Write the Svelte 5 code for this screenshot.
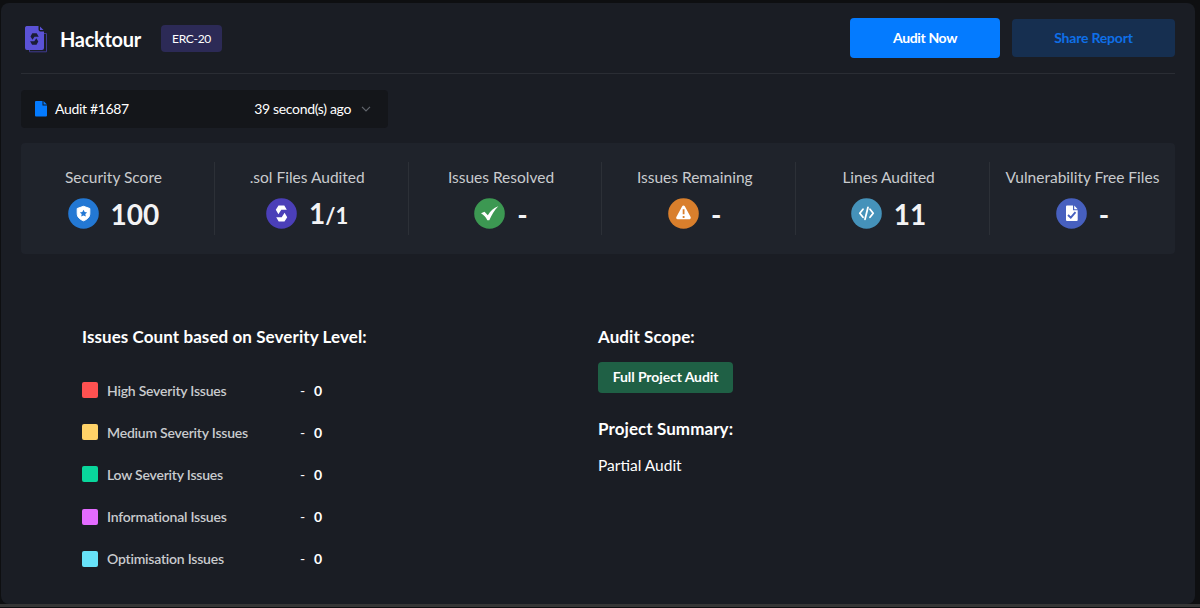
<script>
    const stats = [
        { label: 'Security Score', value: '100', icon: 'shield', color: '#2378d4' },
        { label: '.sol Files Audited', value: '1', total: '/1', icon: 'solidity', color: '#4b3fb8' },
        { label: 'Issues Resolved', value: '-', icon: 'check', color: '#3c9852' },
        { label: 'Issues Remaining', value: '-', icon: 'warning', color: '#d97f2c' },
        { label: 'Lines Audited', value: '11', icon: 'code', color: '#4592ba' },
        { label: 'Vulnerability Free Files', value: '-', icon: 'file', color: '#4760bf' },
    ];

    const issues = [
        { label: 'High Severity Issues', count: 0, color: '#ff5151' },
        { label: 'Medium Severity Issues', count: 0, color: '#ffd268' },
        { label: 'Low Severity Issues', count: 0, color: '#09d69c' },
        { label: 'Informational Issues', count: 0, color: '#e36bff' },
        { label: 'Optimisation Issues', count: 0, color: '#67e3f9' },
    ];
</script>

<main>
    <header>
        <svg class="logo" width="24" height="28" viewBox="0 0 24 28">
            <path d="M20 7.500h2.500v18.300H5.500V23.500" fill="none" stroke="#403b91" />
            <path d="M2.500 0H14.500V3.500a2 2 0 0 0 2 2H20V22a2 2 0 0 1-2 2H3a2 2 0 0 1-2-2V2a2 2 0 0 1 1.500-2Z" fill="#5b52d6" />
            <path d="M16 0.500 19.500 4H16Z" fill="#5b52d6" />
            <path d="M8.300 7.300h4.400l2 3.500h-4.200l-2 3-2-3.200ZM12.500 18.800H8.100l-2-3.500h4.200l2-3 2 3.200Z" fill="#1b1d35" />
        </svg>
        <h1>Hacktour</h1>
        <span class="tag">ERC-20</span>
        <div class="actions">
            <button class="primary">Audit Now</button>
            <button class="share">Share Report</button>
        </div>
    </header>

    <div class="picker">
        <svg width="12" height="16" viewBox="0 0 12 16" fill="#047bff">
            <path d="M1 0h6.500v4.500H12V14.500a1 1 0 0 1-1 1H1a1 1 0 0 1-1-1V1a1 1 0 0 1 1-1Z" />
            <path d="M8.500 0 12 3.500H8.500Z" />
        </svg>
        <span>Audit #1687</span>
        <span class="time">39 second(s) ago</span>
        <svg class="chevron" width="10" height="6" viewBox="0 0 10 6">
            <path d="M1 0.800 5 4.800 9 0.800" fill="none" stroke="#62666d" stroke-width="1.200" />
        </svg>
    </div>

    <section class="stats">
        {#each stats as stat}
            <div class="stat">
                <p>{stat.label}</p>
                <div class="figure">
                    <svg width="31" height="31" viewBox="0 0 31 31" fill="#fff">
                        <circle cx="15.500" cy="15.500" r="15.300" fill={stat.color} />
                        {#if stat.icon === 'shield'}
                            <path d="M15.500 8.300 21.800 10.500V15.500c0 3.500-2.300 5.700-6.300 7.300C11.500 21.200 9.200 19 9.200 15.500V10.500Z" stroke="#fff" stroke-linejoin="round" />
                            <path d="m15.500 11.800 1.200 2.300 2.500.3-1.900 1.700.5 2.500-2.300-1.200-2.300 1.200.5-2.500-1.900-1.700 2.500-.3Z" fill={stat.color} />
                        {:else if stat.icon === 'solidity'}
                            <path d="M12.500 7.500h5.800l2.500 4.300h-5.500L12.400 16.200 9.800 11.800ZM18.500 23.500h-5.800l-2.500-4.300h5.500L18.600 14.800 21.200 19.200Z" />
                        {:else if stat.icon === 'check'}
                            <path d="M7 15.200 10.500 13.800 13.800 17.200C16.500 12.800 19.500 9.800 24.300 8.200 20.500 12 17.500 17 15.300 22.200H13.300C11.800 19 10 17 7 15.200Z" />
                        {:else if stat.icon === 'warning'}
                            <path d="M15.500 9 21.300 19.800H9.700Z" stroke="#fff" stroke-width="3" stroke-linejoin="round" />
                            <path d="M14.700 11.200h1.800v5h-1.800ZM14.700 18h1.800v2h-1.800Z" fill={stat.color} />
                        {:else if stat.icon === 'code'}
                            <path d="M12 11.300 8.800 15.300 12 19.300M19 11.300 22.200 15.300 19 19.300M17 9.300 14 21.300" fill="none" stroke="#fff" stroke-width="1.800" stroke-linecap="round" stroke-linejoin="round" />
                        {:else}
                            <path d="M11 7.500h6v4.800h4.700V22a1 1 0 0 1-1 1H11a1 1 0 0 1-1-1V8.500a1 1 0 0 1 1-1ZM18.200 7.500 21.700 11.200H18.200Z" />
                            <path d="m12 17 2.800 2.700 4.700-5.500" fill="none" stroke={stat.color} stroke-width="1.900" />
                        {/if}
                    </svg>
                    <strong>{stat.value}{#if stat.total}<small>{stat.total}</small>{/if}</strong>
                </div>
            </div>
        {/each}
    </section>

    <section class="details">
        <div class="severity">
            <h2>Issues Count based on Severity Level:</h2>
            <ul>
                {#each issues as issue}
                    <li>
                        <i style="background: {issue.color}"></i>
                        <span class="name">{issue.label}</span>
                        <span class="dash">-</span>
                        <b>{issue.count}</b>
                    </li>
                {/each}
            </ul>
        </div>
        <div>
            <h2>Audit Scope:</h2>
            <span class="scope">Full Project Audit</span>
            <h2>Project Summary:</h2>
            <p class="summary">Partial Audit</p>
        </div>
    </section>
</main>
<footer></footer>

<style>
    :global(body) {
        background: #0e0f11;
        font-family: Lato, sans-serif;
        color: #fff;
    }

    main {
        box-sizing: border-box;
        height: 601px;
        margin: 3px 5px 0 1px;
        padding: 15px 20px 0;
        border-radius: 8px;
        background: #1a1d24;
    }

    header {
        display: flex;
        align-items: flex-start;
        height: 55px;
        border-bottom: 1px solid #2a2d34;
    }

    .logo {
        margin: 8px 0 0 3px;
    }

    h1 {
        margin: 9px 0 0 12px;
        width: 101px;
        font-size: 20px;
        line-height: 24px;
        font-weight: 700;
        letter-spacing: -0.3px;
    }

    .tag {
        margin-top: 7px;
        width: 61px;
        border-radius: 4px;
        background: #2c2a56;
        font-size: 12px;
        line-height: 27px;
        letter-spacing: -0.3px;
        text-align: center;
    }

    .actions {
        display: flex;
        gap: 12px;
        margin-left: auto;
    }

    button {
        padding: 0;
        border: 0;
        border-radius: 4px;
        font: 700 14px/40px Lato, sans-serif;
        color: #fff;
    }

    .primary {
        width: 150px;
        height: 40px;
        background: #047bff;
        letter-spacing: -0.35px;
    }

    .share {
        width: 163px;
        height: 38px;
        margin-top: 1px;
        line-height: 38px;
        background: #162f50;
        color: #0f6fe8;
        letter-spacing: -0.2px;
    }

    .picker {
        box-sizing: border-box;
        display: flex;
        align-items: center;
        width: 367px;
        height: 38px;
        margin-top: 16px;
        padding: 0 17px 0 14px;
        border-radius: 4px;
        background: #14161a;
        font-size: 14px;
        letter-spacing: -0.33px;
    }

    .picker span {
        margin-left: 8px;
        padding-bottom: 2px;
    }

    .picker .time {
        margin-left: auto;
    }

    .chevron {
        margin-left: 10px;
    }

    .stats {
        display: flex;
        box-sizing: border-box;
        height: 111px;
        margin-top: 15px;
        padding: 19px 0;
        border-radius: 4px;
        background: #1f232b;
    }

    .stat {
        box-sizing: border-box;
        width: 193.8px;
        padding-right: 8px;
        border-right: 1px solid #2c3037;
        text-align: center;
    }

    .stat:last-child {
        flex: 1;
        padding: 0;
        border: 0;
    }

    .stat p {
        margin: 5px 0 11px;
        font-size: 15.5px;
        line-height: 20px;
        color: #c9cbce;
        white-space: nowrap;
    }

    .figure {
        display: flex;
        justify-content: center;
        align-items: center;
        gap: 12px;
        height: 31px;
    }

    strong {
        padding-top: 2px;
        font-size: 28px;
        line-height: 31px;
        color: #f3f3f5;
    }

    small {
        font-size: 22px;
    }

    .details {
        display: grid;
        grid-template-columns: 516px 1fr;
        padding: 72px 0 0 61px;
    }

    h2 {
        margin: 0;
        font-size: 17px;
        line-height: 22px;
        font-weight: 700;
        letter-spacing: 0.08px;
    }

    ul {
        display: grid;
        gap: 22.200px;
        margin: 32px 0 0;
        padding: 0;
        list-style: none;
    }

    li {
        display: flex;
        align-items: center;
        height: 20px;
        font-size: 14px;
    }

    i {
        width: 16px;
        height: 16px;
        border-radius: 2px;
    }

    .name {
        width: 193px;
        margin-left: 9px;
        font-weight: 600;
        color: #c9cbce;
        letter-spacing: -0.22px;
    }

    .dash {
        width: 14px;
    }

    .scope {
        box-sizing: border-box;
        display: block;
        width: 135px;
        height: 31px;
        margin: 14px 0 25px;
        border-radius: 4px;
        background: #1f6045;
        font-size: 14px;
        line-height: 30px;
        font-weight: 700;
        letter-spacing: -0.1px;
        text-align: center;
    }

    .summary {
        margin: 15px 0 0;
        font-size: 15.5px;
        line-height: 20px;
    }

    footer {
        height: 3px;
        background: #363636;
    }
</style>
